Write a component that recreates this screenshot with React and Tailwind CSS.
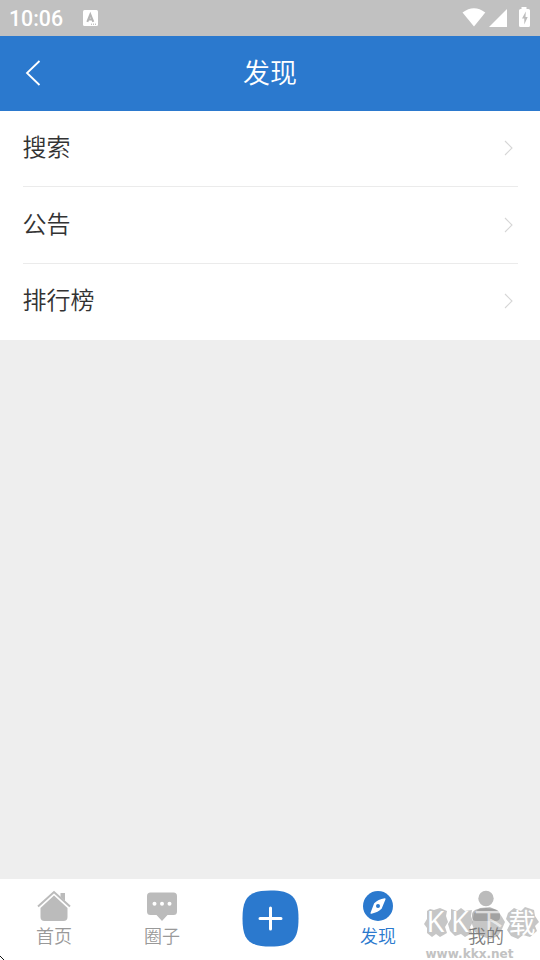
const cjk = "font-['Noto_Sans_CJK_SC',sans-serif]";

function StatusBar() {
  return (
    <div className="flex h-9 items-center bg-[#c1c1c1] text-white">
      <span className="ml-[9px] w-[74px] pt-[1px] font-[Roboto,sans-serif] text-[21.3px] leading-9 font-medium">10:06</span>
      <svg className="h-9 w-[15px]" viewBox="83 0 15 36">
        <rect x="83" y="10" width="15" height="16" rx="1.5" fill="#fff" />
        <path d="M87.3 21.8L90.3 14.5L93.3 21.8M88.4 19.5h3.8" fill="none" stroke="#b5b5b5" strokeWidth="2" />
        <path d="M91 24.2h1M93 24.2h1M95 24.2h1" stroke="#aaa" />
      </svg>
      <svg className="ml-auto h-9 w-[80px]" viewBox="460 0 80 36" fill="#fff">
        <path d="M462.5 12.5Q474 4 485.3 12.5L474 26.5Z" />
        <path d="M489 27L507 9V27Z" />
        <path d="M521.5 7h5v2h2q1.5 0 1.5 1.5V25.500q0 1.500-1.500 1.500h-8q-1.500 0-1.500-1.500V10.500Q519 9 520.500 9h1Z" />
        <path d="M525.800 11.500L522 18.500h2.300V24.500L527.700 17h-2.200Z" fill="#bdbdbd" />
      </svg>
    </div>
  );
}

function Row({ label, className, labelClass }) {
  return (
    <div className={"mx-[22.5px] flex items-center justify-between text-[#333] " + className}>
      <span className={"text-[24px] leading-[36px] " + labelClass}>{label}</span>
      <svg className="mr-[4px] h-4 w-[10px]" viewBox="0 0 10 16" fill="none" stroke="#d6d6d6" strokeWidth="1.1">
        <path d="M1 1L8 8L1 15" />
      </svg>
    </div>
  );
}

function Tab({ label, color, children }) {
  return (
    <div className={"flex w-[108px] flex-col items-center pt-[11px] " + color}>
      {children}
      <span className="z-10 text-[18px] leading-[26px]">{label}</span>
    </div>
  );
}

function Watermark() {
  return (
    <svg className="pointer-events-none absolute right-0 bottom-0 h-[60px] w-[120px]" viewBox="420 900 120 60">
      <g fill="#888" fillOpacity=".48">
        <path d="M427 911L430 909L434 910L440 908L447 911L446 916L448 922L445 927L447 933L440 937L436 934L432 937L427 933V928L424 924L427 919Z" />
        <path d="M451 909L457 911L461 908L465 911L472 910L471 916L473 922L470 927L472 933L465 937L461 934L455 936L450 931L448 924L451 919Z" />
        <path d="M474 913L480 908L490 907L498 911L502 917L505 922L502 929L498 936L490 939L481 936L475 932L472 924Z" />
        <path d="M508 913L514 908L521 911L525 907L534 910L535 916L539 922L535 926L537 931L530 937L523 935L518 939L511 936L507 930L510 924L506 919Z" />
      </g>
      <g fill="#fff" className="font-['Open_Sans','Noto_Sans_CJK_SC',sans-serif]">
        <text x="426.500" y="932" fontSize="29" fontWeight="400">K</text>
        <text x="451" y="932" fontSize="29" fontWeight="400">K</text>
        <text x="474" y="935" fontSize="31" fontWeight="400" fillOpacity=".65">下</text>
        <text x="508.500" y="933" fontSize="27" fontWeight="400">载</text>
      </g>
      <text x="425.500" y="957.500" fontSize="12.500" fontWeight="700" fill="#c2c2c2" textLength="88" lengthAdjust="spacingAndGlyphs" className="font-['DejaVu_Sans',sans-serif]">www.kkx.net</text>
    </svg>
  );
}

export default function App() {
  return (
    <div className={"relative flex h-[960px] w-[540px] flex-col overflow-hidden bg-[#eee] font-[350] " + cjk}>
      <StatusBar />
      <header className="grid h-[75px] grid-cols-[1fr_auto_1fr] items-center bg-[#2b79ce] text-white">
        <svg className="mb-px ml-[25px] h-[26px] w-4" viewBox="0 0 16 26" fill="none" stroke="white" strokeWidth="1.8">
          <path d="M14.500 1L2 13L14.500 25" />
        </svg>
        <h1 className="pb-[4px] text-[27px] leading-[40px] font-[350]">发现</h1>
      </header>
      <main className="flex-1">
        <div className="bg-white">
          <Row label="搜索" className="h-[76px] border-b border-[#ebebeb] pb-[2px]" labelClass="pb-[3px]" />
          <Row label="公告" className="h-[77px] border-b border-[#ebebeb]" labelClass="pb-[5px]" />
          <Row label="排行榜" className="h-[76px] pb-[2px]" labelClass="pb-[4px]" />
        </div>
      </main>
      <nav className="flex h-[81px] bg-white">
        <Tab label="首页" color="text-[#999]">
          <svg className="h-[32px] w-[34px]" viewBox="37 890 34 32">
            <path d="M38 906.5L54 892L70 906.5" fill="none" stroke="#bbb" strokeWidth="2" />
            <path d="M60.500 893h4.500v8l-4.500-4Z" fill="#bbb" />
            <path d="M54 895.500L67.500 908V917q0 4-4 4h-19q-4 0-4-4V908Z" fill="#bbb" />
          </svg>
        </Tab>
        <Tab label="圈子" color="text-[#999]">
          <svg className="h-[32px] w-[32px]" viewBox="146 890 32 32">
            <path d="M150.500 892.500h23q3.500 0 3.500 3.500v15.500q0 3.500-3.500 3.500h-6L162 921l-5.500-6h-6q-3.500 0-3.500-3.500V896q0-3.500 3.500-3.500Z" fill="#bbb" />
            <g fill="#fff"><circle cx="154.500" cy="903.700" r="2" /><circle cx="162" cy="903.700" r="2" /><circle cx="169.500" cy="903.700" r="2" /></g>
          </svg>
        </Tab>
        <div className="w-[108px] pt-[11px] pl-[26px]">
          <svg className="h-[57px] w-[57px]" viewBox="242 890 57 57">
            <path d="M270.500 890.500C292 890.500 298.500 897 298.500 918.500S292 946.500 270.500 946.500S242.500 940 242.500 918.500S249 890.500 270.500 890.500Z" fill="#2b79ce" />
            <path d="M260 918.500h21M270.500 908v21" stroke="#fff" strokeWidth="3" strokeLinecap="round" />
          </svg>
        </div>
        <Tab label="发现" color="text-[#2b79ce]">
          <svg className="h-[32px] w-[32px]" viewBox="362 890 32 32">
            <circle cx="378" cy="906" r="15" fill="#2b79ce" />
            <path d="M384.800 899L381 908.300Q378 911.500 371.300 913L374.800 903.800Q378.500 900 384.800 899Z" fill="#fff" stroke="#fff" strokeWidth="1.6" strokeLinejoin="round" />
            <circle cx="378" cy="906" r="2" fill="#2b79ce" />
          </svg>
        </Tab>
        <Tab label="我的" color="text-[#7d7d7d]">
          <svg className="h-[32px] w-[32px]" viewBox="470 890 32 32" fill="#bbb">
            <circle cx="486" cy="898.500" r="7.700" />
            <path d="M472 915Q472 908 486 908T500 915V917q0 4-4 4H476q-4 0-4-4Z" />
          </svg>
        </Tab>
      </nav>
      <Watermark />
      <svg className="absolute bottom-0 left-0 h-1 w-1" viewBox="0 0 4 4" fill="#111">
        <path d="M0 0h1v1H0ZM1 1h1v1H1ZM2 2h1v1H2ZM3 3h1v1H3Z" />
      </svg>
    </div>
  );
}
